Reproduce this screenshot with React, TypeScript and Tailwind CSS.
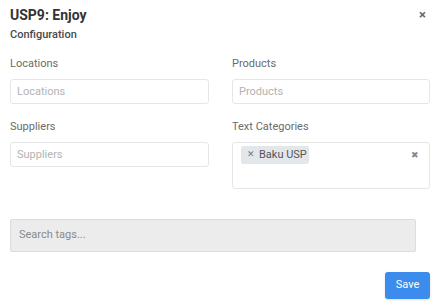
import React from 'react';

const Field: React.FC<{ label: string; children: React.ReactNode }> = ({ label, children }) => (
  <div className="flex flex-col">
    <label className="text-[11px] leading-[14px] text-[#6b6b6b] mb-[8px]">{label}</label>
    {children}
  </div>
);

const TextBox: React.FC<{ placeholder: string }> = ({ placeholder }) => (
  <input
    placeholder={placeholder}
    className="h-[25px] w-full border border-[#e6e6e6] rounded-[3px] px-[6px] text-[11px] text-[#333] placeholder:text-[#b3b3b3] outline-none bg-white"
  />
);

const App: React.FC = () => {
  return (
    <div
      className="w-[444px] h-[302px] bg-white overflow-hidden pl-[10px] pr-[14px] relative"
      style={{ fontFamily: 'Roboto, "Liberation Sans", sans-serif' }}
    >
      <div className="flex items-center justify-between pt-[4px] h-[26px]">
        <h2 className="text-[14px] font-bold text-[#333]">USP9: Enjoy</h2>
        <span className="text-[13px] font-bold text-[#666] leading-none mr-[4px] -mt-[2px]">×</span>
      </div>
      <div className="text-[11px] font-medium text-[#4a4a4a] mt-[2px] leading-[14px]">Configuration</div>

      <div className="grid grid-cols-[199px_198px] gap-x-[23px] gap-y-[16px] mt-[15px]">
        <Field label="Locations">
          <TextBox placeholder="Locations" />
        </Field>
        <Field label="Products">
          <TextBox placeholder="Products" />
        </Field>
        <Field label="Suppliers">
          <TextBox placeholder="Suppliers" />
        </Field>
        <Field label="Text Categories">
          <div className="h-[47px] border border-[#e6e6e6] rounded-[3px] relative">
            <div className="absolute left-[8px] top-[3px] h-[18px] w-[68px] bg-[#e4e7ea] rounded-[2px] flex items-center pl-[6px] text-[11px] text-[#555]">
              <span className="text-[9px] text-[#777] mr-[4px]">✕</span>
              Baku USP
            </div>
            <span className="absolute right-[10px] top-[6px] text-[9px] text-[#888]">✖</span>
          </div>
        </Field>
      </div>

      <div className="mt-[30px] w-[406px] h-[33px] bg-[#ececed] border border-[#dcdcdc] rounded-[2px] flex items-center px-[8px] text-[11px] text-[#8a8a8a]">
        Search tags...
      </div>

      <div className="flex justify-end mt-[20px]">
        <button className="w-[45px] h-[27px] bg-[#3b8ced] text-white text-[11px] rounded-[3px] shadow-sm">
          Save
        </button>
      </div>
    </div>
  );
};

export default App;
